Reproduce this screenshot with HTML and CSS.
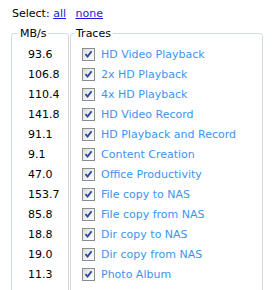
FILE: index.html
```html
<!DOCTYPE html>
<html>
<head>
<meta charset="utf-8">
<link rel="stylesheet" href="styles.css">
</head>
<body>
<div class="select">Select: <a href="#" class="sel">all</a> <a href="#" class="sel">none</a></div>
<div class="panels">
  <fieldset class="fs fs-mbs">
    <legend>MB/s</legend>
    <div class="rows">
      <div class="row num">93.6</div>
      <div class="row num">106.8</div>
      <div class="row num">110.4</div>
      <div class="row num">141.8</div>
      <div class="row num">91.1</div>
      <div class="row num">9.1</div>
      <div class="row num">47.0</div>
      <div class="row num">153.7</div>
      <div class="row num">85.8</div>
      <div class="row num">18.8</div>
      <div class="row num">19.0</div>
      <div class="row num">11.3</div>
    </div>
  </fieldset>
  <fieldset class="fs fs-traces">
    <legend>Traces</legend>
    <div class="rows">
      <label class="row trace"><span class="cb"><svg viewBox="0 0 13 13" width="13" height="13"><path d="M3.5 6.2 L5.6 8.6 L9.6 3.2" fill="none" stroke="#2a46b0" stroke-width="1.9"/></svg></span>HD Video Playback</label>
      <label class="row trace"><span class="cb"><svg viewBox="0 0 13 13" width="13" height="13"><path d="M3.5 6.2 L5.6 8.6 L9.6 3.2" fill="none" stroke="#2a46b0" stroke-width="1.9"/></svg></span>2x HD Playback</label>
      <label class="row trace"><span class="cb"><svg viewBox="0 0 13 13" width="13" height="13"><path d="M3.5 6.2 L5.6 8.6 L9.6 3.2" fill="none" stroke="#2a46b0" stroke-width="1.9"/></svg></span>4x HD Playback</label>
      <label class="row trace"><span class="cb"><svg viewBox="0 0 13 13" width="13" height="13"><path d="M3.5 6.2 L5.6 8.6 L9.6 3.2" fill="none" stroke="#2a46b0" stroke-width="1.9"/></svg></span>HD Video Record</label>
      <label class="row trace"><span class="cb"><svg viewBox="0 0 13 13" width="13" height="13"><path d="M3.5 6.2 L5.6 8.6 L9.6 3.2" fill="none" stroke="#2a46b0" stroke-width="1.9"/></svg></span>HD Playback and Record</label>
      <label class="row trace"><span class="cb"><svg viewBox="0 0 13 13" width="13" height="13"><path d="M3.5 6.2 L5.6 8.6 L9.6 3.2" fill="none" stroke="#2a46b0" stroke-width="1.9"/></svg></span>Content Creation</label>
      <label class="row trace"><span class="cb"><svg viewBox="0 0 13 13" width="13" height="13"><path d="M3.5 6.2 L5.6 8.6 L9.6 3.2" fill="none" stroke="#2a46b0" stroke-width="1.9"/></svg></span>Office Productivity</label>
      <label class="row trace"><span class="cb"><svg viewBox="0 0 13 13" width="13" height="13"><path d="M3.5 6.2 L5.6 8.6 L9.6 3.2" fill="none" stroke="#2a46b0" stroke-width="1.9"/></svg></span>File copy to NAS</label>
      <label class="row trace"><span class="cb"><svg viewBox="0 0 13 13" width="13" height="13"><path d="M3.5 6.2 L5.6 8.6 L9.6 3.2" fill="none" stroke="#2a46b0" stroke-width="1.9"/></svg></span>File copy from NAS</label>
      <label class="row trace"><span class="cb"><svg viewBox="0 0 13 13" width="13" height="13"><path d="M3.5 6.2 L5.6 8.6 L9.6 3.2" fill="none" stroke="#2a46b0" stroke-width="1.9"/></svg></span>Dir copy to NAS</label>
      <label class="row trace"><span class="cb"><svg viewBox="0 0 13 13" width="13" height="13"><path d="M3.5 6.2 L5.6 8.6 L9.6 3.2" fill="none" stroke="#2a46b0" stroke-width="1.9"/></svg></span>Dir copy from NAS</label>
      <label class="row trace"><span class="cb"><svg viewBox="0 0 13 13" width="13" height="13"><path d="M3.5 6.2 L5.6 8.6 L9.6 3.2" fill="none" stroke="#2a46b0" stroke-width="1.9"/></svg></span>Photo Album</label>
    </div>
  </fieldset>
</div>
</body>
</html>
```

FILE: styles.css
```css
html, body {
  margin: 0;
  padding: 0;
  background: #fff;
}
body {
  font-family: "DejaVu Sans", Verdana, sans-serif;
  font-size: 11px;
  color: #000;
  padding: 7px 0 0 12px;
  overflow: hidden;
  height: 290px;
  box-sizing: border-box;
}
.select {
  line-height: 13px;
  height: 13px;
}
.sel {
  color: #1a1ae0;
  text-decoration: underline;
  margin-right: 6px;
}
.panels {
  display: flex;
  margin-top: 7px;
  margin-left: -1px;
}
.fs {
  margin: 0;
  border: 1px solid #d3dbe3;
  border-radius: 3px;
  padding: 0;
  min-width: 0;
  box-sizing: border-box;
}
.fs legend {
  padding: 0 2px;
  line-height: 13px;
}
.fs-mbs {
  width: 58px;
}
.fs-mbs legend {
  margin-left: 6px;
}
.fs-traces {
  width: 193px;
  margin-left: 1px;
}
.fs-traces legend {
  margin-left: 3px;
}
.rows {
  padding: 4px 0 40px 0;
}
.fs-mbs .rows {
  padding-left: 16px;
}
.fs-traces .rows {
  padding-left: 11px;
}
.row {
  height: 20px;
  display: flex;
  align-items: center;
}
.trace {
  color: #3d94f0;
}
.cb {
  width: 13px;
  height: 13px;
  box-sizing: border-box;
  border: 1px solid #8a8e94;
  background: linear-gradient(135deg, #dcdcd6 0%, #f4f4f0 60%, #ffffff 100%);
  margin-right: 6px;
  display: flex;
  flex: none;
}
.cb svg {
  margin: -1px;
}
```
